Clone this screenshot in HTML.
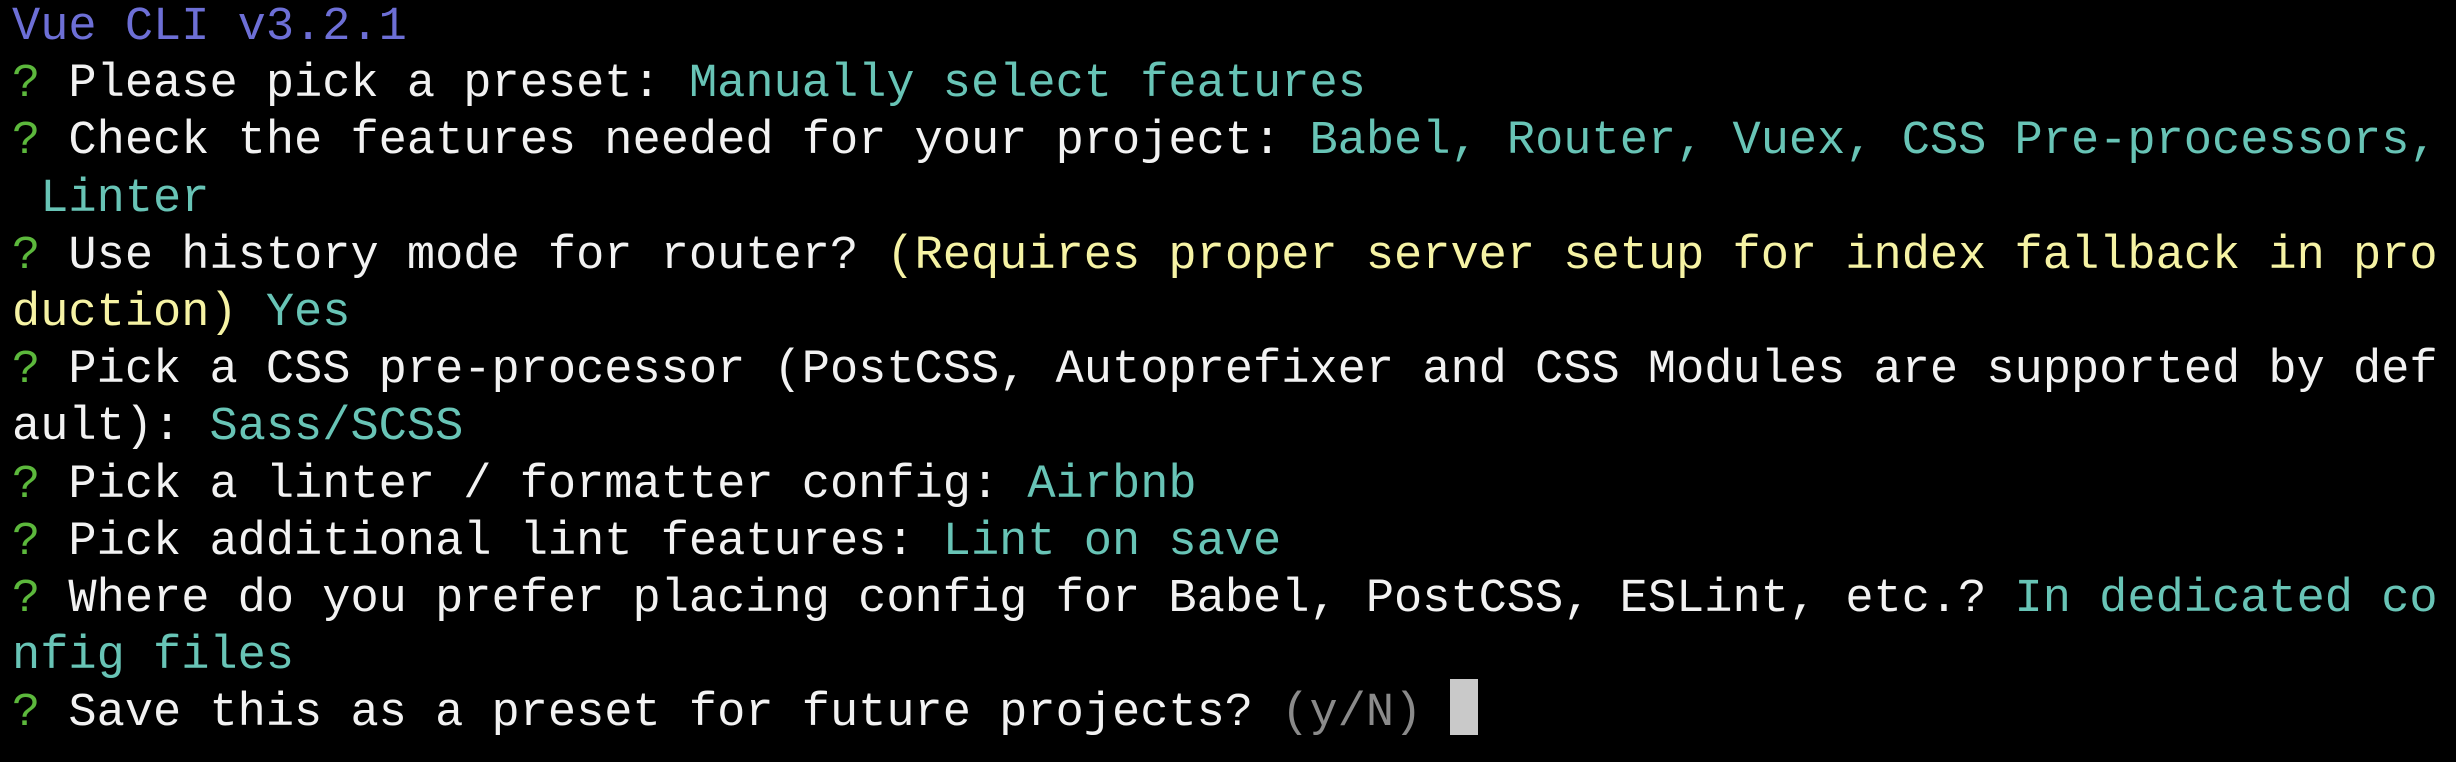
<!DOCTYPE html>
<html><head><meta charset="utf-8"><style>
html,body{margin:0;padding:0;background:#000;width:2456px;height:762px;overflow:hidden}
pre{margin:0;position:absolute;left:12px;top:-1px;font-family:"Liberation Mono",monospace;font-size:47px;line-height:57.2px;color:#f2f2f2;white-space:pre}
.p{color:#6d6fd6}.g{color:#5cb83c}.t{color:#68c4b6}.y{color:#f6f3a4}.d{color:#8a8a8a}
.c{display:inline-block;width:28px;height:56px;background:#c9c9c9;vertical-align:top;margin-top:-6px}
</style></head><body><pre><span class="p">Vue CLI v3.2.1</span>
<span class="g">?</span> Please pick a preset: <span class="t">Manually select features</span>
<span class="g">?</span> Check the features needed for your project: <span class="t">Babel, Router, Vuex, CSS Pre-processors,</span>
<span class="t"> Linter</span>
<span class="g">?</span> Use history mode for router? <span class="y">(Requires proper server setup for index fallback in pro</span>
<span class="y">duction)</span><span class="t"> Yes</span>
<span class="g">?</span> Pick a CSS pre-processor (PostCSS, Autoprefixer and CSS Modules are supported by def
ault): <span class="t">Sass/SCSS</span>
<span class="g">?</span> Pick a linter / formatter config: <span class="t">Airbnb</span>
<span class="g">?</span> Pick additional lint features: <span class="t">Lint on save</span>
<span class="g">?</span> Where do you prefer placing config for Babel, PostCSS, ESLint, etc.? <span class="t">In dedicated co</span>
<span class="t">nfig files</span>
<span class="g">?</span> Save this as a preset for future projects? <span class="d">(y/N)</span> <span class="c"></span></pre></body></html>
